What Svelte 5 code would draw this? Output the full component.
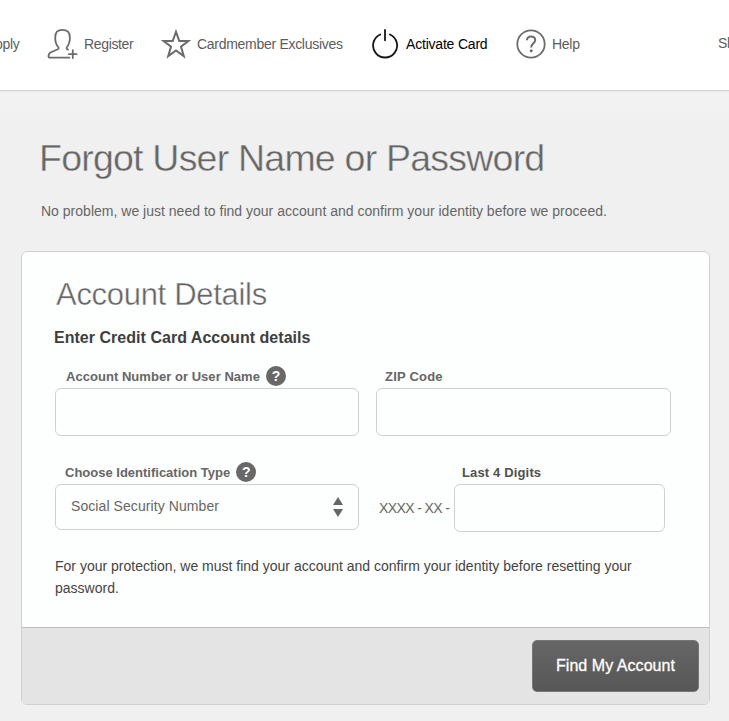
<script>
  const hint = '?';
</script>

<div class="page">
  <header>
    <nav>
      <a class="apply" href="#apply">Apply</a>
      <a class="register" href="#register">
        <svg width="32" height="32" viewBox="0 0 32 32" fill="none" stroke="#6c6c6c" stroke-width="1.8" stroke-linecap="round" stroke-linejoin="round">
          <path d="M22.3 29.7H2.3Q1.5 29.7 1.5 28.5Q1.4 25.5 4 24.3L10.8 21.2Q12.3 20.3 11.2 19C8.4 16 8.2 13 8.2 9.8C8 4.2 10.7 1.8 15.4 1.8C20.2 1.8 23 4.3 22.9 9.8C22.8 13.3 22.4 16.2 20 19Q18.7 20.5 21 21.6" />
          <path d="M25.8 22.2V30M21.8 26.1H29.7" />
        </svg>
        <span>Register</span>
      </a>
      <a class="exclusives" href="#exclusives">
        <svg width="30" height="30" viewBox="0 0 30 30" fill="none" stroke="#6c6c6c" stroke-width="2">
          <path d="M15 2.8L18.3 12.1H27.3L20 17.6L22.8 27.1L15 21.4L7.2 27.1L10 17.6L2.7 12.1H11.7Z" />
        </svg>
        <span>Cardmember Exclusives</span>
      </a>
      <a class="activate" href="#activate">
        <svg width="28" height="32" viewBox="0 0 28 32" fill="none" stroke="#161616" stroke-width="1.8" stroke-linecap="round">
          <path d="M14 2V12.3M9.3 6.5A12 12 0 1 0 18.9 6.5" />
        </svg>
        <span>Activate Card</span>
      </a>
      <a class="help" href="#help">
        <svg width="30" height="30" viewBox="0 0 30 30" fill="none" stroke="#6c6c6c">
          <circle cx="15" cy="15" r="13.7" stroke-width="1.8" />
          <path d="M11 11.3C11.1 8.7 12.7 7.6 15 7.6C17.4 7.6 19.2 8.8 19.2 11.2C19.2 14.4 15.2 14.2 15.2 18.4" stroke-width="2" />
          <circle cx="15.2" cy="21.8" r="1.5" fill="#6c6c6c" stroke="none" />
        </svg>
        <span>Help</span>
      </a>
    </nav>
    <a class="share" href="#share">Share</a>
  </header>

  <main>
    <h1>Forgot User Name or Password</h1>
    <p class="intro">No problem, we just need to find your account and confirm your identity before we proceed.</p>

    <form class="card">
      <div class="body">
        <h2>Account Details</h2>
        <h3>Enter Credit Card Account details</h3>
        <div class="row">
          <div class="field account">
            <label for="account"><span>Account Number or User Name</span><i>{hint}</i></label>
            <input id="account" type="text" />
          </div>
          <div class="field zip">
            <label for="zip"><span>ZIP Code</span></label>
            <input id="zip" type="text" />
          </div>
        </div>
        <div class="row second">
          <div class="field type">
            <label for="type"><span>Choose Identification Type</span><i>{hint}</i></label>
            <button id="type" type="button" class="select">
              <span>Social Security Number</span>
              <svg width="10" height="20" viewBox="0 0 10 20" fill="#666">
                <path d="M5 0L10 8H0ZM0 12H10L5 20Z" />
              </svg>
            </button>
          </div>
          <span class="mask">XXXX - XX -</span>
          <div class="field last">
            <label for="last"><span>Last 4 Digits</span></label>
            <input id="last" type="text" />
          </div>
        </div>
        <p class="note">For your protection, we must find your account and confirm your identity before resetting your password.</p>
      </div>
      <footer><button class="submit" type="button"><span>Find My Account</span></button></footer>
    </form>
  </main>
</div>

<style>
  :global(body) { margin: 0; background: #f0f0f0; }
  * { box-sizing: border-box; }
  .page {
    width: 729px; height: 721px; overflow: hidden;
    background: linear-gradient(#f3f3f3 91px, #f0f0f0 130px);
    font-family: "Liberation Sans", Arial, sans-serif;
    color: #666;
  }
  header {
    height: 91px; padding-top: 28px;
    display: flex; justify-content: space-between; align-items: flex-start;
    background: #fff; border-bottom: 1px solid #d6d6d6;
    box-shadow: 0 1px 1px #e8e8e8;
    white-space: nowrap; overflow: hidden;
  }
  nav { display: flex; }
  header a {
    display: flex; align-items: center; height: 32px; flex: none;
    color: #5c5c5c; text-decoration: none; font-size: 14px; letter-spacing: -0.29px;
  }
  header a svg { flex: none; }
  .apply { width: 34px; margin-left: -14px; }
  .register { margin-left: 27px; width: 114px; }
  .register span { margin-left: 5px; letter-spacing: -0.35px; }
  .exclusives { width: 210px; }
  .exclusives span { margin-left: 6px; }
  .activate { width: 145px; color: #000; }
  .activate span { margin-left: 7px; letter-spacing: -0.2px; }
  .help span { margin-left: 6px; }
  .share { width: 11px; height: 30px; overflow: hidden; }

  main { padding: 46px 19px 0 21px; }
  h1 {
    margin: 0 0 0 18px; height: 43px; line-height: 42px;
    font-size: 37.5px; font-weight: 400; letter-spacing: -0.78px; white-space: nowrap;
    -webkit-text-stroke: 0.4px #f1f1f1;
  }
  .intro {
    margin: 22px 0 0 20px; height: 18px; line-height: 18px;
    font-size: 14px; letter-spacing: 0.01px; white-space: nowrap;
  }
  .card {
    margin: 31px 0 0; height: 454px; border: 1px solid #d0d0d0; border-radius: 6px;
    background: #fdfefe; overflow: hidden; display: flex; flex-direction: column;
  }
  .body { height: 375px; padding: 25px 0 0 33px; }
  h2 {
    margin: 0 0 0 1px; height: 36px; line-height: 36px;
    font-size: 31px; font-weight: 400; letter-spacing: -0.3px;
    -webkit-text-stroke: 0.4px #fdfefe;
  }
  h3 { margin: 15px 0 0 -1px; height: 20px; line-height: 20px; font-size: 16px; letter-spacing: 0.03px; color: #3e3e3e; }
  .row { display: flex; align-items: flex-end; margin-top: 17px; }
  .row.second { margin-top: 25px; align-items: flex-start; }
  label {
    display: flex; align-items: center; height: 22px; padding: 0 0 0 10px; margin-bottom: 1px;
    font-size: 13px; font-weight: 700; white-space: nowrap;
  }
  .account label { padding-left: 11px; letter-spacing: 0.04px; }
  .zip label { padding-left: 9px; letter-spacing: 0.2px; }
  .last label { padding-left: 8px; letter-spacing: 0.15px; color: #505050; }
  i {
    width: 20px; height: 20px; margin-left: 6px; border-radius: 50%;
    background: #686868; color: #fff; font: 700 14px/20px "Liberation Sans", Arial, sans-serif; text-align: center;
  }
  input, .select {
    display: block; width: 100%; height: 48px; border: 1px solid #ccd2d0; border-radius: 6px;
    background: #fdfefe; font: 14px "Liberation Sans", Arial, sans-serif; color: #666; outline: 0;
  }
  .account, .type { width: 304px; }
  .zip { width: 295px; margin-left: 17px; }
  .last { width: 211px; margin-left: 4px; }
  .select { height: 46px; padding: 0 15px; display: flex; justify-content: space-between; align-items: center; }
  .select span { margin-top: -2px; letter-spacing: 0.08px; }
  .mask { width: 71px; margin: 37px 0 0 20px; font-size: 14px; line-height: 20px; letter-spacing: -0.6px; white-space: nowrap; }
  .note { margin: 23px 0 0; width: 600px; font-size: 14px; line-height: 22px; color: #444; }
  footer {
    flex: 1; border-top: 1px solid #bdbdbd; background: #e4e4e4;
    display: flex; justify-content: flex-end; padding: 12px 10px 0 0;
  }
  .submit {
    width: 167px; height: 52px; border: 1px solid #777; border-radius: 5px;
    background: linear-gradient(#666, #575757); color: #fff; padding: 0;
    font: 16px "Liberation Sans", Arial, sans-serif; letter-spacing: 0.05px; -webkit-text-stroke: 0.3px #fff;
  }
</style>
